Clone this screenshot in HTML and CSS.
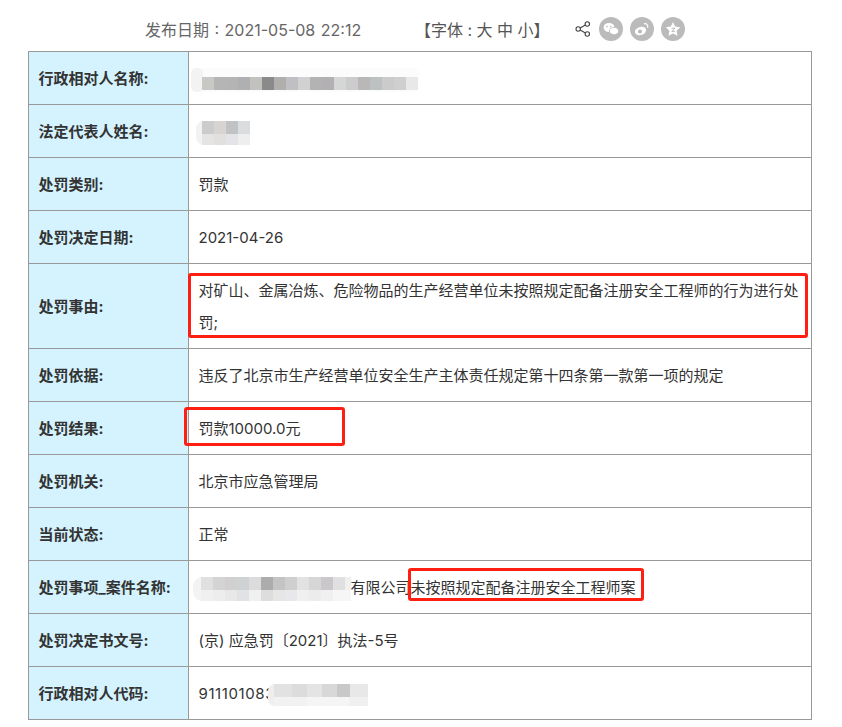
FILE: index.html
```html
<!DOCTYPE html>
<html lang="zh-CN">
<head>
<meta charset="utf-8">
<title>行政处罚信息</title>
<link rel="stylesheet" href="styles.css">
</head>
<body>
<div class="page">
  <header class="meta">
    <span class="date">发布日期 : 2021-05-08 22:12</span>
    <span class="font-size">【字体 : 大 中 小】</span>
    <span class="share">
      <svg class="share-icon" width="16" height="16" viewBox="0 0 16 16"><g fill="none" stroke="#444" stroke-width="1.1"><circle cx="3.2" cy="8" r="2.2"/><circle cx="12.3" cy="3" r="2.2"/><circle cx="12.3" cy="13" r="2.2"/><path d="M5.1 6.9 10.4 4M5.1 9.1l5.3 2.9"/></g></svg>
      <svg class="round" width="24" height="24" viewBox="0 0 24 24"><circle cx="12" cy="12" r="12" fill="#bbb"/><ellipse cx="10" cy="10.5" rx="5.4" ry="4.5" fill="#fff"/><ellipse cx="15" cy="14" rx="4.6" ry="3.7" fill="#fff" stroke="#bbb" stroke-width=".8"/><circle cx="8" cy="9.5" r=".8" fill="#bbb"/><circle cx="11.6" cy="9.5" r=".8" fill="#bbb"/></svg>
      <svg class="round" width="24" height="24" viewBox="0 0 24 24"><circle cx="12" cy="12" r="12" fill="#bbb"/><ellipse cx="10.5" cy="14" rx="5.8" ry="4" fill="#fff" transform="rotate(-18 10.5 14)"/><circle cx="10" cy="14.4" r="2" fill="#bbb"/><path d="M14 6.8c2.6-.5 4.300 1.400 3.600 3.900" fill="none" stroke="#fff" stroke-width="1.300"/></svg>
      <svg class="round" width="24" height="24" viewBox="0 0 24 24"><circle cx="12" cy="12" r="12" fill="#bbb"/><path d="m12 5 2.200 4.600 5 .7-3.600 3.500.9 5L12 16.400 7.500 18.800l.9-5-3.600-3.500 5-.7z" fill="#fff"/><path d="M10.500 11.200h3.500l-3.300 3.200h3.300" fill="none" stroke="#bbb" stroke-width="1"/></svg>
    </span>
  </header>

  <table class="info">
    <tr>
      <th>行政相对人名称:</th>
      <td><svg class="mosaic mosaic-name" width="228" height="24" viewBox="0 0 228 24"><rect width="228" height="24" rx="6" fill="#fcfcfc"/><rect y="0" width="12" height="24" rx="5" fill="#f3f3f3"/><g transform="translate(11 9)"><rect x="0" width="12" height="13" fill="#c9c8c5"/><rect x="12" width="12" height="13" fill="#b5b5b5"/><rect x="24" width="12" height="13" fill="#b4b4b4"/><rect x="36" width="12" height="13" fill="#aeb0b2"/><rect x="48" width="12" height="13" fill="#c2c1be"/><rect x="60" width="12" height="13" fill="#8b8a8b"/><rect x="72" width="12" height="13" fill="#b0afad"/><rect x="84" width="12" height="13" fill="#c0c0c4"/><rect x="96" width="12" height="13" fill="#d0d2d2"/><rect x="108" width="12" height="13" fill="#b3b3b3"/><rect x="120" width="12" height="13" fill="#b2b0b2"/><rect x="132" width="12" height="13" fill="#d5d6d6"/><rect x="144" width="12" height="13" fill="#ccccce"/><rect x="156" width="12" height="13" fill="#b9b8b6"/><rect x="168" width="12" height="13" fill="#bcc1c2"/><rect x="180" width="12" height="13" fill="#cbcbcb"/><rect x="192" width="12" height="13" fill="#cfcfcf"/><rect x="204" width="12" height="13" fill="#e8e8e8"/></g></svg></td>
    </tr>
    <tr>
      <th>法定代表人姓名:</th>
      <td><svg class="mosaic mosaic-person" width="54" height="24" viewBox="0 0 54 24"><rect width="20" height="24" rx="8" fill="#f3f1f1"/><rect x="6" width="12" height="13" fill="#cacccd"/><rect x="18" width="12" height="13" fill="#d8d4d2"/><rect x="30" width="12" height="13" fill="#c1c2c4"/><rect x="42" width="12" height="13" fill="#dbdcde"/><rect x="6" y="13" width="12" height="11" fill="#e4e4e4"/><rect x="18" y="13" width="12" height="11" fill="#e2e0de"/><rect x="30" y="13" width="12" height="11" fill="#e4e4e8"/><rect x="42" y="13" width="12" height="11" fill="#eeeeef"/></svg></td>
    </tr>
    <tr><th>处罚类别:</th><td>罚款</td></tr>
    <tr><th>处罚决定日期:</th><td>2021-04-26</td></tr>
    <tr><th>处罚事由:</th><td>对矿山、金属冶炼、危险物品的生产经营单位未按照规定配备注册安全工程师的行为进行处罚;</td></tr>
    <tr><th>处罚依据:</th><td>违反了北京市生产经营单位安全生产主体责任规定第十四条第一款第一项的规定</td></tr>
    <tr><th>处罚结果:</th><td>罚款10000.0元</td></tr>
    <tr><th>处罚机关:</th><td>北京市应急管理局</td></tr>
    <tr><th>当前状态:</th><td>正常</td></tr>
    <tr>
      <th>处罚事项_案件名称:</th>
      <td><svg class="mosaic mosaic-case" width="158" height="24" viewBox="0 0 158 24"><rect width="20" height="24" rx="9" fill="#f4f3f3"/><g transform="translate(8 0)"><rect x="0" width="12" height="13" fill="#e0e0e0"/><rect x="12" width="12" height="13" fill="#d4d4d4"/><rect x="24" width="12" height="13" fill="#d0d0d0"/><rect x="36" width="12" height="13" fill="#cfd2d3"/><rect x="48" width="12" height="13" fill="#dcdcdc"/><rect x="60" width="12" height="13" fill="#acacac"/><rect x="72" width="12" height="13" fill="#c4c4c4"/><rect x="84" width="12" height="13" fill="#cfcfcf"/><rect x="96" width="12" height="13" fill="#e2e2e2"/><rect x="108" width="12" height="13" fill="#d6d6d6"/><rect x="120" width="12" height="13" fill="#cac8ca"/><rect x="132" width="12" height="13" fill="#e0e0e0"/><rect x="144" width="6" height="13" fill="#f0f0f0"/><rect x="0" y="13" width="12" height="11" fill="#f0f0f0"/><rect x="12" y="13" width="12" height="11" fill="#ededed"/><rect x="24" y="13" width="12" height="11" fill="#e8e8e8"/><rect x="36" y="13" width="12" height="11" fill="#e0e2e3"/><rect x="48" y="13" width="12" height="11" fill="#f0f0f0"/><rect x="60" y="13" width="12" height="11" fill="#dddddd"/><rect x="72" y="13" width="12" height="11" fill="#e6e6e6"/><rect x="84" y="13" width="12" height="11" fill="#e8e8ec"/><rect x="96" y="13" width="12" height="11" fill="#f0f0f0"/><rect x="108" y="13" width="12" height="11" fill="#ececec"/><rect x="120" y="13" width="12" height="11" fill="#f0f0f0"/><rect x="132" y="13" width="18" height="11" fill="#f6f6f6"/></g></svg>有限公司未按照规定配备注册安全工程师案</td>
    </tr>
    <tr><th>处罚决定书文号:</th><td>(京) 应急罚〔2021〕执法-5号</td></tr>
    <tr>
      <th>行政相对人代码:</th>
      <td class="code">911101083<svg class="mosaic mosaic-code" width="100" height="22" viewBox="0 0 100 22"><rect width="16" height="22" rx="7" fill="#eeeeee"/><g transform="translate(6 0)"><rect width="18" height="13" fill="#e2e2e2"/><rect x="18" width="15" height="13" fill="#dcdcdc"/><rect x="33" width="15" height="13" fill="#e4e4e4"/><rect x="48" width="15" height="13" fill="#d8d8d8"/><rect x="63" width="13" height="13" fill="#c8c8c8"/><rect x="76" width="18" height="13" fill="#e8e8e8"/><rect y="13" width="33" height="9" fill="#f2f2f2"/><rect x="33" y="13" width="42" height="9" fill="#f5f5f5"/><rect x="75" y="13" width="19" height="9" fill="#f0f0f0"/></g></svg></td>
    </tr>
  </table>

  <div class="mark mark-reason"></div>
  <div class="mark mark-result"></div>
  <div class="mark mark-case"></div>
</div>
</body>
</html>
```

FILE: styles.css
```css
html, body {
  margin: 0;
  padding: 0;
  background: #fff;
}

.page {
  position: relative;
  width: 842px;
  height: 727px;
  overflow: hidden;
  font-family: "Inter", "Noto Sans CJK SC", "Liberation Sans", sans-serif;
  color: #333;
}

.meta {
  display: flex;
  align-items: center;
  height: 51px;
  padding: 6px 0 0 145px;
  box-sizing: border-box;
  font-size: 16px;
  color: #666;
  white-space: nowrap;
}

.date {
  width: 270px;
  word-spacing: 1px;
}

.font-size {
  width: 160px;
  color: #555;
}

.share {
  display: flex;
  align-items: center;
  gap: 7px;
}

.share-icon {
  margin-right: 1px;
}

.info {
  width: 784px;
  margin-left: 28px;
  border-collapse: collapse;
  table-layout: fixed;
  font-size: 15px;
  line-height: 32px;
}

.info th,
.info td {
  border: 1px solid #999;
  padding: 11px 10px 9px 9.5px;
  text-align: left;
}

.info th {
  width: 139.5px;
  background: #d4f3ff;
  font-weight: 700;
  white-space: nowrap;
}

.code {
  letter-spacing: 0.6px;
}

.mosaic {
  vertical-align: middle;
}

.mosaic-name {
  margin-left: -8px;
}

.mosaic-person {
  margin-left: -3px;
}

.mosaic-case {
  margin-left: -6px;
}

.mosaic-code {
  margin-left: -7px;
}

.mark {
  position: absolute;
  box-sizing: border-box;
  border: 3px solid #ff1e12;
  border-radius: 3px;
}

.mark-reason {
  left: 188px;
  top: 273px;
  width: 620px;
  height: 65px;
}

.mark-result {
  left: 184px;
  top: 407px;
  width: 161px;
  height: 39px;
}

.mark-case {
  left: 408px;
  top: 568px;
  width: 236px;
  height: 33px;
}
```
